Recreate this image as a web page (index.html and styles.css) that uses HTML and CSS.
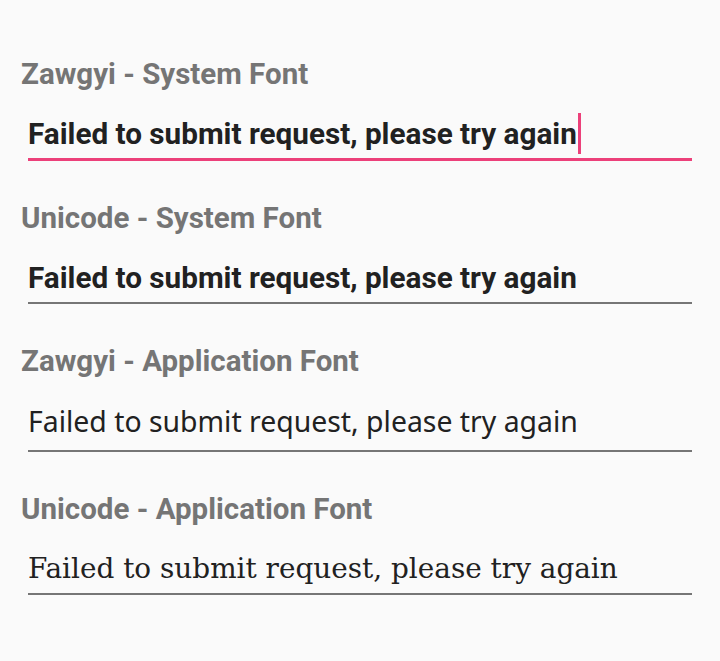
FILE: index.html
```html
<!DOCTYPE html>
<html>
<head>
<meta charset="utf-8">
<link rel="stylesheet" href="styles.css">
</head>
<body>
<main class="form">
  <section class="field">
    <div class="label">Zawgyi - System Font</div>
    <div class="input focused"><span class="value sys">Failed to submit request, please try again</span><span class="caret"></span></div>
  </section>
  <section class="field">
    <div class="label">Unicode - System Font</div>
    <div class="input"><span class="value sys">Failed to submit request, please try again</span></div>
  </section>
  <section class="field">
    <div class="label">Zawgyi - Application Font</div>
    <div class="input input-sans"><span class="value sans">Failed to submit request, please try again</span></div>
  </section>
  <section class="field">
    <div class="label">Unicode - Application Font</div>
    <div class="input"><span class="value serif">Failed to submit request, please try again</span></div>
  </section>
</main>
</body>
</html>
```
FILE: styles.css
```css
html, body {
  margin: 0;
  padding: 0;
  background: #fafafa;
}
body {
  width: 720px;
  height: 661px;
  overflow: hidden;
  font-family: Roboto, "Liberation Sans", sans-serif;
}
.form {
  display: flex;
  flex-direction: column;
  gap: 40px;
  padding: 57px 28px 0 21px;
}
.field {
  display: flex;
  flex-direction: column;
}
.label {
  font-size: 29.5px;
  font-weight: 700;
  color: #757575;
  line-height: 34px;
  height: 34px;
  white-space: nowrap;
}
.input {
  margin-left: 7px;
  margin-top: 23px;
  height: 40px;
  line-height: 40px;
  padding-bottom: 4px;
  display: flex;
  align-items: flex-start;
  border-bottom: 2px solid #767676;
  color: #212121;
}
.input-sans {
  padding-bottom: 9px;
}
.input.focused {
  border-bottom: 3px solid #ec407a;
}
.value {
  white-space: nowrap;
}
.sys {
  font-family: Roboto, sans-serif;
  font-size: 29.7px;
  font-weight: 700;
}
.sans {
  font-family: "Noto Sans", sans-serif;
  font-size: 28.4px;
  font-weight: 400;
}
.serif {
  font-family: "DejaVu Serif", serif;
  font-size: 27.9px;
  font-weight: 400;
}
.caret {
  width: 3px;
  height: 41px;
  margin-top: -1px;
  background: #ec407a;
  margin-left: 1px;
}
```
